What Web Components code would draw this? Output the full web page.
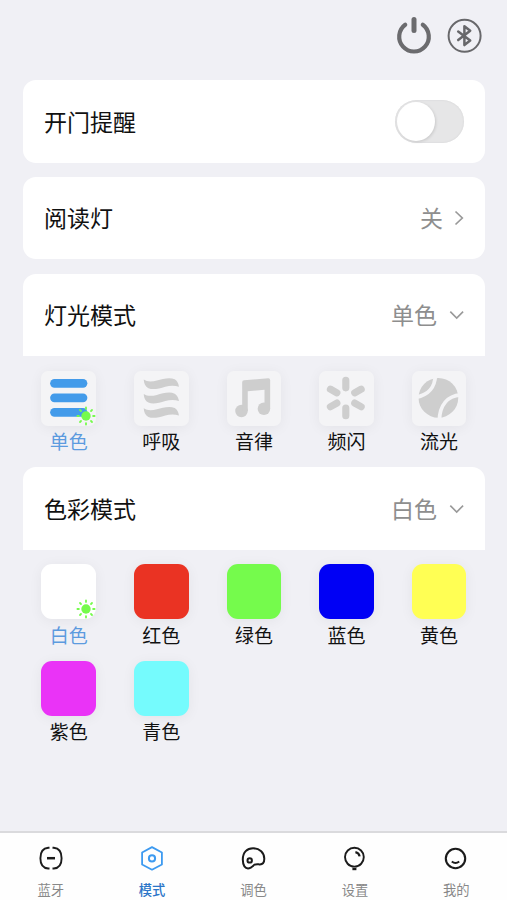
<!DOCTYPE html>
<html lang="zh-CN">
<head>
<meta charset="UTF-8">
<meta name="viewport" content="width=device-width, initial-scale=1">
<title>模式</title>
<style>
	html, body {
		margin: 0;
		height: 100%;
		overflow: hidden;
	}

	body {
		background: #f0f0f5;
		font-family: 'Noto Sans CJK SC', sans-serif;
		color: #111;
	}
</style>
</head>
<body>
<light-app></light-app>

<script>
// Icons share one table so that tiles and tabs only pass a name.
const ICONS = {
	power: `<svg width="36" height="40" viewBox="0 0 36 40" fill="none" stroke="#6b6b6e" stroke-width="4.2" stroke-linecap="round">
		<path d="M9.2 9.8A14.8 14.8 0 1 0 26.8 9.8"/><path d="M18 4.4V15.4" stroke-width="5"/></svg>`,
	bluetooth: `<svg width="36" height="36" viewBox="0 0 36 36" fill="none" stroke="#68686b">
		<circle cx="17.6" cy="17.8" r="16" stroke-width="2"/>
		<path d="M11.2 13.5L23.2 22.6L17.4 27.1V8.2L23.2 12.8L11.2 22.1" stroke-width="2.5" stroke-linejoin="round" stroke-linecap="round"/></svg>`,
	right: `<svg width="10" height="16" viewBox="0 0 10 16" fill="none" stroke="#999" stroke-width="1.7"><path d="M1.5 1.5L8.3 8L1.5 14.5"/></svg>`,
	down: `<svg width="15" height="10" viewBox="0 0 15 10" fill="none" stroke="#999" stroke-width="1.6"><path d="M1.3 1.6L7.7 8L14.1 1.6"/></svg>`,
	bars: `<svg viewBox="0 0 55 55" fill="#439bea"><rect x="9.2" y="8" width="37.5" height="8.8" rx="4.4"/>
		<rect x="9.2" y="22.6" width="37.5" height="8.8" rx="4.4"/><rect x="9.2" y="37.2" width="37.5" height="8.8" rx="4.4"/></svg>`,
	waves: `<svg viewBox="0 0 55 55" fill="#cecece"><defs><path id="w" d="M9.8 8.6C13 11 18 11 23 9.6C29 7.8 36 6 41 8.3C43.4 9.6 44.8 12.4 45.3 15.8C41.5 14.6 36.5 14.4 31.5 15.8C25 17.8 19 19.2 14.5 17.3C11.5 15.8 9.9 12.6 9.8 8.6Z"/></defs>
		<use href="#w"/><use href="#w" y="14.5"/><use href="#w" y="29"/></svg>`,
	music: `<svg viewBox="0 0 55 55" fill="#cecece"><circle cx="14.6" cy="40.3" r="6.3"/><circle cx="37.2" cy="38" r="6.3"/>
		<path d="M15.3 11.3Q15.3 9.4 17.2 9.2L41.5 7.4Q43.5 7.3 43.5 9.3V38H37.8V18.8L20.9 20.5V40.3H15.3Z"/></svg>`,
	flash: `<svg viewBox="0 0 55 55" stroke="#cecece" stroke-width="7.2" stroke-linecap="round">
		<path d="M27 9.3V17M27 37.3V45M11.5 18.3L18 22M36 32.3L42.5 36M42.5 18.3L36 22M18 32.3L11.5 36"/></svg>`,
	flow: `<svg viewBox="0 0 55 55" fill="none"><circle cx="26.6" cy="27" r="20" fill="#cecece"/>
		<path d="M23.6 4C23 17 17 24 4 26.5M49 24C36 25 28 34 27.5 50" stroke="#f4f4f6" stroke-width="3.8"/></svg>`,
	sun: `<svg viewBox="0 0 20 20" stroke="#75fb4c" stroke-width="1.8" stroke-linecap="round"><circle cx="10" cy="10" r="4.7" fill="#75fb4c" stroke="none"/>
		<path d="M10 1.4V2.9M10 17.1V18.6M1.4 10H2.9M17.1 10H18.6M4 4L5 5M15 15L16 16M16 4L15 5M5 15L4 16"/></svg>`,
	link: `<svg viewBox="0 0 26 26" fill="none" stroke="currentColor" stroke-width="1.9">
		<path d="M11.5 2.8H10.2Q2.4 3.5 2.4 13.2T10.2 23.5H11.5M14.5 2.8H15.8Q23.6 3.5 23.6 13.2T15.8 23.5H14.5"/><path d="M9 13.2H17" stroke-width="2.5"/></svg>`,
	hex: `<svg viewBox="0 0 26 26" fill="none" stroke="currentColor" stroke-width="1.8" stroke-linejoin="round">
		<path d="M13 2.1L22.9 7.5V19.5L13 24.7L3.1 19.5V7.5Z"/><circle cx="13" cy="13.4" r="3.1" stroke-width="2"/></svg>`,
	palette: `<svg viewBox="0 0 26 26" fill="none" stroke="currentColor" stroke-width="2">
		<path d="M8.2 23.3C4 24.2 1.8 20.2 1.8 14.6C1.8 7.2 6.1 3.3 12.1 3.3C18.7 3.3 23.3 7.9 23.3 13.7C23.3 18 21.5 19.7 18.3 19.4C15.8 19.2 14 18.9 12.5 20.4C11 21.7 10.5 22.9 8.2 23.3Z"/><circle cx="8.7" cy="15.4" r="2.2"/></svg>`,
	balloon: `<svg viewBox="0 0 26 26" fill="none" stroke="currentColor" stroke-width="1.9">
		<path d="M12.4 21.6C6.9 21.6 3 17.2 3 12S7.2 2.8 12.4 2.8S21.8 6.8 21.8 12S17.9 21.6 12.4 21.6Z"/>
		<path d="M13.4 7.2Q17 7.9 17.6 11.4" stroke-width="2.2"/><path d="M10.4 24H14.4" stroke-width="2.4"/></svg>`,
	face: `<svg viewBox="0 0 26 26" fill="none" stroke="currentColor" stroke-width="2.1">
		<circle cx="12.5" cy="13.5" r="9.7"/><path d="M8.8 16.5Q12.5 19.5 16.2 16.5"/></svg>`,
};

class LightIcon extends HTMLElement {
	constructor() {
		super();
		this.attachShadow({ mode: 'open' });
	}

	connectedCallback() {
		this.shadowRoot.innerHTML = `
			<style>
				:host { display: block; flex: none; }
				svg { display: block; }
				svg:not([width]) { width: 100%; height: 100%; }
			</style>
			${ICONS[this.getAttribute('name')] ?? ''}`;
	}
}

class LightSwitch extends HTMLElement {
	constructor() {
		super();
		this.attachShadow({ mode: 'open' });
		this.shadowRoot.innerHTML = `
			<style>
				:host {
					display: flex;
					box-sizing: border-box;
					width: 69px;
					height: 43px;
					padding: 2px;
					border-radius: 22px;
					background: #e6e6e7;
					box-shadow: inset 0 0 2px #d2d2d3;
				}

				:host([on]) {
					justify-content: flex-end;
					background: #439bea;
				}

				span {
					width: 38px;
					height: 39px;
					border-radius: 50%;
					background: #fff;
					box-shadow: 1px 1px 3px rgba(0, 0, 0, .12);
				}
			</style>
			<span></span>`;
		this.addEventListener('click', () => this.toggleAttribute('on'));
	}
}

class SettingRow extends HTMLElement {
	constructor() {
		super();
		this.attachShadow({ mode: 'open' });
	}

	connectedCallback() {
		this.shadowRoot.innerHTML = `
			<style>
				:host {
					display: flex;
					align-items: center;
					justify-content: space-between;
					box-sizing: border-box;
					height: 82.5px;
					padding: 0 21.5px;
					border-radius: 13px;
					background: #fff;
					font-size: 23px;
					line-height: 34px;
				}

				/* An open row is joined to the grid below it. */
				:host([open]) { border-radius: 13px 13px 0 0; }
				.label { padding-bottom: 2px; }
				.value { display: flex; align-items: center; color: #8e8e8e; }
				.text { padding-bottom: 2px; }
			</style>
			<span class="label">${this.getAttribute('label')}</span>
			<div class="value"><span class="text"><slot></slot></span><slot name="end"></slot></div>`;
	}
}

class ModeTile extends HTMLElement {
	constructor() {
		super();
		this.attachShadow({ mode: 'open' });
	}

	connectedCallback() {
		const icon = this.getAttribute('icon');
		const color = this.getAttribute('color') ?? '#f4f4f6';
		this.shadowRoot.innerHTML = `
			<style>
				:host {
					display: flex;
					flex-direction: column;
					align-items: center;
					height: 96.5px;
					font-size: 19px;
					line-height: 28px;
				}

				:host([selected]) { color: #5c9bdf; }

				.box {
					position: relative;
					width: 54.6px;
					height: 55px;
					border-radius: ${icon ? 7 : 11}px;
					background: ${color};
					box-shadow: 0 2px 14px rgba(0, 0, 0, .055);
				}

				.badge {
					position: absolute;
					right: 0;
					bottom: 0;
					width: 20px;
					height: 20px;
				}

				.label { margin-top: 1.4px; }
			</style>
			<div class="box">
				${icon ? `<light-icon name="${icon}"></light-icon>` : ''}
				${this.hasAttribute('selected') ? '<light-icon class="badge" name="sun"></light-icon>' : ''}
			</div>
			<span class="label"><slot></slot></span>`;
	}
}

class TileGrid extends HTMLElement {
	constructor() {
		super();
		this.attachShadow({ mode: 'open' });
		this.shadowRoot.innerHTML = `
			<style>
				:host {
					display: grid;
					grid-template-columns: repeat(5, 1fr);
					padding-top: 14.6px;
				}
			</style>
			<slot></slot>`;
	}
}

class TabItem extends HTMLElement {
	constructor() {
		super();
		this.attachShadow({ mode: 'open' });
	}

	connectedCallback() {
		this.shadowRoot.innerHTML = `
			<style>
				:host {
					display: flex;
					flex: 1;
					flex-direction: column;
					align-items: center;
					padding-top: 12px;
					font-size: 13.3px;
					line-height: 18px;
					color: #1b1b1b;
				}

				:host([active]) { color: #3d9af0; }
				light-icon { width: 26px; height: 26px; }
				span { margin-top: 9.5px; color: #888; }
				:host([active]) span { color: #2c76c8; font-weight: 500; }
			</style>
			<light-icon name="${this.getAttribute('icon')}"></light-icon>
			<span><slot></slot></span>`;
	}
}

class LightApp extends HTMLElement {
	constructor() {
		super();
		this.attachShadow({ mode: 'open' });
		this.shadowRoot.innerHTML = `
			<style>
				:host {
					display: flex;
					flex-direction: column;
					height: 100vh;
				}

				header {
					display: flex;
					flex: none;
					justify-content: flex-end;
					box-sizing: border-box;
					height: 80.3px;
					padding: 15px 24px 0 0;
					gap: 15px;
				}

				header light-icon:last-child { margin-top: 2.5px; }

				main {
					display: flex;
					flex: 1;
					flex-direction: column;
					min-height: 0;
					padding: 0 21.6px 0 22.5px;
				}

				setting-row + setting-row { margin-top: 14.2px; }
				.right { margin-left: 11px; }
				.down { margin-left: 12px; }

				nav {
					display: flex;
					flex: none;
					box-sizing: border-box;
					height: 69px;
					border-top: 2px solid #dadadd;
					background: #fefefe;
				}
			</style>
			<header>
				<light-icon name="power"></light-icon>
				<light-icon name="bluetooth"></light-icon>
			</header>
			<main>
				<setting-row label="开门提醒"><light-switch slot="end"></light-switch></setting-row>
				<setting-row label="阅读灯">关<light-icon slot="end" class="right" name="right"></light-icon></setting-row>
				<setting-row label="灯光模式" open>单色<light-icon slot="end" class="down" name="down"></light-icon></setting-row>
				<tile-grid>
					<mode-tile icon="bars" selected>单色</mode-tile>
					<mode-tile icon="waves">呼吸</mode-tile>
					<mode-tile icon="music">音律</mode-tile>
					<mode-tile icon="flash">频闪</mode-tile>
					<mode-tile icon="flow">流光</mode-tile>
				</tile-grid>
				<setting-row label="色彩模式" open>白色<light-icon slot="end" class="down" name="down"></light-icon></setting-row>
				<tile-grid>
					<mode-tile color="#ffffff" selected>白色</mode-tile>
					<mode-tile color="#ea3323">红色</mode-tile>
					<mode-tile color="#75fb4c">绿色</mode-tile>
					<mode-tile color="#0000f5">蓝色</mode-tile>
					<mode-tile color="#ffff54">黄色</mode-tile>
					<mode-tile color="#ea33f7">紫色</mode-tile>
					<mode-tile color="#75fbfd">青色</mode-tile>
				</tile-grid>
			</main>
			<nav>
				<tab-item icon="link">蓝牙</tab-item>
				<tab-item icon="hex" active>模式</tab-item>
				<tab-item icon="palette">调色</tab-item>
				<tab-item icon="balloon">设置</tab-item>
				<tab-item icon="face">我的</tab-item>
			</nav>`;
	}
}

customElements.define('light-icon', LightIcon);
customElements.define('light-switch', LightSwitch);
customElements.define('setting-row', SettingRow);
customElements.define('mode-tile', ModeTile);
customElements.define('tile-grid', TileGrid);
customElements.define('tab-item', TabItem);
customElements.define('light-app', LightApp);
</script>
</body>
</html>
